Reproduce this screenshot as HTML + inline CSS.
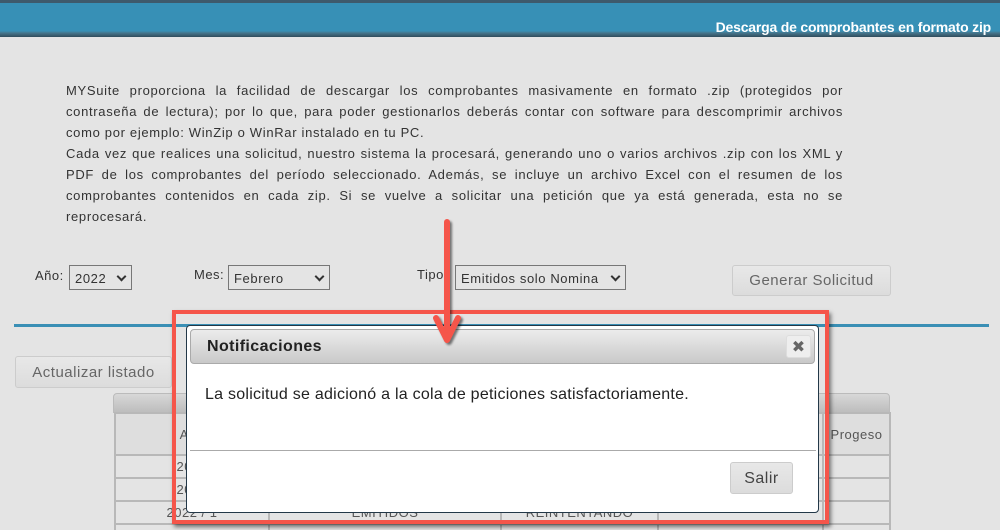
<!DOCTYPE html>
<html><head><meta charset="utf-8"><style>
*{margin:0;padding:0;box-sizing:border-box}
html,body{width:1000px;height:530px;overflow:hidden}
body{background:#e4e4e4;font-family:"DejaVu Sans","Liberation Sans",sans-serif;color:#333;position:relative}
.abs{position:absolute}
#hdr{left:0;top:0;width:1000px;height:37px;background:linear-gradient(#3e5a6c 0,#3e5a6c 3px,#3790b6 3px,#3790b6 31px,#46758c 33px,#2f4c5c 37px)}
#hdr span{position:absolute;right:9px;top:19px;font:bold 14px "Liberation Sans",sans-serif;color:#fff;letter-spacing:-0.2px}
#txt{left:66px;top:80px;width:777px;font:13px/21px "Liberation Sans",sans-serif;letter-spacing:0.68px;text-align:justify;color:#333}
.lbl{font:13px "Liberation Sans",sans-serif;color:#333;letter-spacing:.5px}
.sel{border:1px solid #777;background:#e4e4e4;height:25px;font:13px "Liberation Sans",sans-serif;color:#333;padding:5px 0 0 5px;letter-spacing:.6px}
.sel i{position:absolute;right:6px;top:7px;width:7px;height:7px;border-right:2px solid #333;border-bottom:2px solid #333;transform:rotate(45deg)}
.btn{border:1px solid #ccc;border-radius:3px;background:linear-gradient(#e8e8e8,#dcdcdc);font:15px "Liberation Sans",sans-serif;color:#666;text-align:center;letter-spacing:.5px}
table{border-collapse:collapse}
td{border:2px solid #b8b8b8;font:13px "Liberation Sans",sans-serif;color:#555;text-align:center;letter-spacing:.5px}
</style></head><body>
<div id="hdr" class="abs"><span>Descarga de comprobantes en formato zip</span></div>
<div id="txt" class="abs">MYSuite proporciona la facilidad de descargar los comprobantes masivamente en formato .zip (protegidos por contraseña de lectura); por lo que, para poder gestionarlos deberás contar con software para descomprimir archivos como por ejemplo: WinZip o WinRar instalado en tu PC.<br>Cada vez que realices una solicitud, nuestro sistema la procesará, generando uno o varios archivos .zip con los XML y PDF de los comprobantes del período seleccionado. Además, se incluye un archivo Excel con el resumen de los comprobantes contenidos en cada zip. Si se vuelve a solicitar una petición que ya está generada, esta no se reprocesará.</div>
<div class="abs lbl" style="left:35px;top:268px">Año:</div>
<div class="abs sel" style="left:69px;top:265px;width:63px">2022<i></i></div>
<div class="abs lbl" style="left:194px;top:267px">Mes:</div>
<div class="abs sel" style="left:228px;top:265px;width:102px">Febrero<i></i></div>
<div class="abs lbl" style="left:417px;top:267px">Tipo</div>
<div class="abs sel" style="left:455px;top:265px;width:171px">Emitidos solo Nomina<i></i></div>
<div class="abs btn" style="left:732px;top:265px;width:159px;height:31px;line-height:30px">Generar Solicitud</div>
<div class="abs" style="left:14px;top:324px;width:975px;height:3px;background:#3a8fb5"></div>
<div class="abs btn" style="left:15px;top:356px;width:157px;height:32px;line-height:32px">Actualizar listado</div>
<div class="abs" style="left:113px;top:393px;width:777px;height:20px;border-radius:4px 4px 0 0;background:linear-gradient(#d8d8d8,#bdbdbd);border:1px solid #bbb"></div>
<table class="abs" style="left:114px;top:412px">
<tr style="height:42px;background:#dedede"><td style="width:154px">Año</td><td style="width:232px"></td><td style="width:157px"></td><td style="width:165px"></td><td style="width:67px">Progeso</td></tr>
<tr style="height:23px"><td>2022</td><td></td><td></td><td></td><td></td></tr>
<tr style="height:23px"><td>2022</td><td></td><td></td><td></td><td></td></tr>
<tr style="height:23px"><td>2022 / 1</td><td>EMITIDOS</td><td>REINTENTANDO</td><td></td><td></td></tr>
<tr style="height:23px"><td></td><td></td><td></td><td></td><td></td></tr>
</table>
<div class="abs" style="left:172px;top:310px;width:657px;height:214px;border:4px solid #f5554a;box-shadow:2px 3px 4px rgba(0,0,0,.5)"></div>
<div class="abs" style="left:186px;top:325px;width:633px;height:188px;background:#fff;border:1px solid #233848;border-radius:4px">
 <div class="abs" style="left:3px;top:3px;width:625px;height:35px;border:1px solid #aaa;border-radius:4px;background:linear-gradient(#ececec,#c9c9c9)">
  <div class="abs" style="left:16px;top:8px;font:bold 16px 'Liberation Sans',sans-serif;color:#222;letter-spacing:.4px">Notificaciones</div>
  <div class="abs" style="left:595px;top:5px;width:25px;height:23px;border:1px solid #ddd;border-radius:3px;background:#eee;font:bold 16px 'DejaVu Sans',sans-serif;color:#666;text-align:center;line-height:22px">✖</div>
 </div>
 <div class="abs" style="left:18px;top:60px;font:16px 'Liberation Sans',sans-serif;color:#222;letter-spacing:.25px">La solicitud se adicionó a la cola de peticiones satisfactoriamente.</div>
 <div class="abs" style="left:3px;top:124px;width:626px;height:1px;background:#aaa"></div>
 <div class="abs btn" style="left:543px;top:136px;width:63px;height:32px;line-height:31px;color:#444;font-size:16px">Salir</div>
</div>
<svg class="abs" style="left:430px;top:218px" width="36" height="130" viewBox="0 0 36 130">
<g filter="drop-shadow(2px 2px 1px rgba(0,0,0,.5))"><line x1="17" y1="4" x2="17" y2="112" stroke="#f5554a" stroke-width="6" stroke-linecap="round"/><path d="M6 100 L17 122 L28 100" fill="none" stroke="#f5554a" stroke-width="6" stroke-linecap="round" stroke-linejoin="round"/></g>
</svg>
</body></html>
